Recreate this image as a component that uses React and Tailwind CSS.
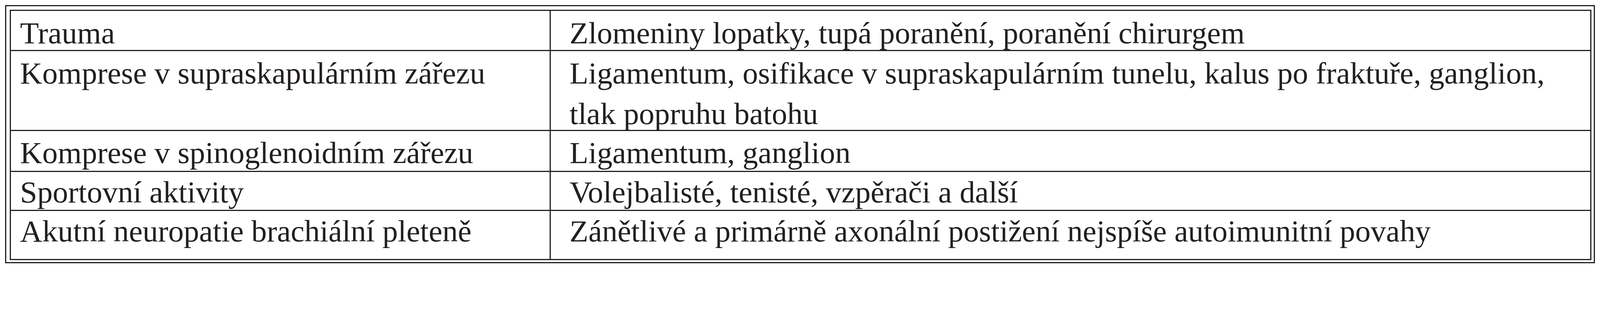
export default function App() {
  const rows = [
    { a: "Trauma", b: ["Zlomeniny lopatky, tupá poranění, poranění chirurgem"], h: "h-[2.4485vw]", pt: "pt-[0.1083vw]" },
    {
      a: "Komprese v supraskapulárním zářezu",
      b: ["Ligamentum, osifikace v supraskapulárním tunelu, kalus po fraktuře, ganglion,", "tlak popruhu batohu"],
      h: "h-[4.9837vw]",
      pt: "pt-[0.1083vw]",
    },
    { a: "Komprese v spinoglenoidním zářezu", b: ["Ligamentum, ganglion"], h: "h-[2.5785vw]", pt: "pt-[0.1083vw]" },
    { a: "Sportovní aktivity", b: ["Volejbalisté, tenisté, vzpěrači a další"], h: "h-[2.4269vw]", pt: "pt-0" },
    {
      a: "Akutní neuropatie brachiální pleteně",
      b: ["Zánětlivé a primárně axonální postižení nejspíše autoimunitní povahy"],
      h: "h-[3.0769vw]",
      pt: "pt-0",
    },
  ];
  return (
    <div className="w-full h-screen overflow-hidden bg-white pt-[0.325vw] px-[0.325vw]">
      <div className="w-full border-[0.0867vw] border-[#231f20] pt-[0.2167vw] pl-[0.2167vw] pr-[0.13vw] pb-[0.13vw]">
        <div
          className="w-full border-[0.0867vw] border-[#231f20] text-[#231f20] text-[1.9285vw] leading-[2.5352vw] whitespace-nowrap"
          style={{ fontFamily: '"Liberation Serif", "Times New Roman", serif' }}
        >
          {rows.map((r, i) => (
            <div
              key={i}
              className={`flex ${r.h} ${i > 0 ? "border-t-[0.0867vw] border-[#231f20]" : ""}`}
            >
              <div className={`w-[33.7378vw] shrink-0 border-r-[0.0867vw] border-[#231f20] pl-[0.5634vw] ${r.pt}`}>{r.a}</div>
              <div className={`flex-1 min-w-0 pl-[1.1701vw] ${r.pt}`}>
                {r.b.map((line, j) => (
                  <div key={j}>{line}</div>
                ))}
              </div>
            </div>
          ))}
        </div>
      </div>
    </div>
  );
}
